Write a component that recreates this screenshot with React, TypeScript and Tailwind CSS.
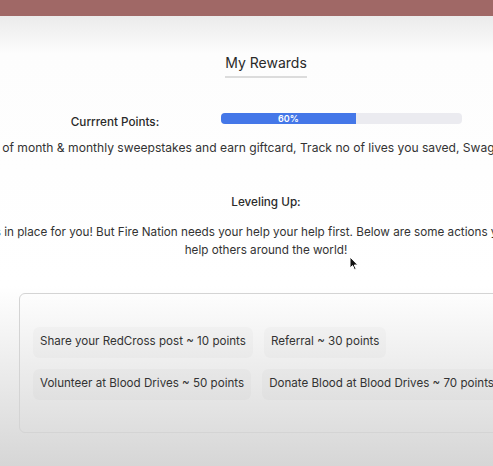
import React from 'react'

const actions = [
  ['Share your RedCross post ~ 10 points', 'Referral ~ 30 points'],
  ['Volunteer at Blood Drives ~ 50 points', 'Donate Blood at Blood Drives ~ 70 points'],
]

function ProgressBar({ value }: { value: number }) {
  // fill is drawn a bit short of the label, as in the design
  return (
    <div className="w-[241px] h-[11px] rounded-[4px] bg-[#ebebf0] overflow-hidden flex">
      <div
        className="h-full w-[56%] bg-[#4477e8] flex items-center justify-center text-[9px] leading-none font-semibold text-white"
      >
        {value}%
      </div>
    </div>
  )
}

function Cursor() {
  return (
    <svg
      className="absolute left-[349px] top-[256px]"
      width="10"
      height="15"
      viewBox="0 0 10 15"
    >
      <path
        d="M1 1 L1 12 L3.6 9.6 L5.6 14 L7.2 13.3 L5.3 9 L8.8 9 Z"
        fill="#111"
        stroke="#fff"
        strokeWidth="1"
        strokeLinejoin="round"
      />
    </svg>
  )
}

export default function App() {
  return (
    <div className="relative w-[493px] h-[466px] overflow-hidden font-['Inter',sans-serif] text-[#333]">
      <div className="h-4 bg-[#a06866]" />
      <div className="h-[450px] pl-[39px] flex justify-center bg-[linear-gradient(to_bottom,#ebebeb_0px,#fdfdfd_38px,#ffffff_270px,#d6d6d6_100%)]">
        <div className="w-[494px] shrink-0 flex flex-col items-center">
          <h1 className="mt-[35px] text-[14px] leading-6 text-[#2a2a2a] border-b-2 border-[#dcdcdc] pb-[1px]">
            My Rewards
          </h1>

          <div className="mt-[28px] w-full flex items-center">
            <div className="w-[192px] text-center text-[11.7px] font-medium text-[#2a2a2a] pt-[8px]">
              Currrent Points:
            </div>
            <div className="ml-[10px]">
              <ProgressBar value={60} />
            </div>
          </div>

          <p className="mt-[7px] whitespace-nowrap text-[12.1px] leading-[18px]">
            Become top Donor of month &amp; monthly sweepstakes and earn giftcard, Track no of lives you saved, Swag T-Shirts, badges &amp; more!
          </p>

          <h2 className="mt-[36px] text-[11.7px] leading-[18px] font-medium text-[#2a2a2a]">
            Leveling Up:
          </h2>

          <p className="mt-[12px] text-center text-[11.7px] leading-[18px]">
            <span className="block whitespace-nowrap">
              Rewards in place for you! But Fire Nation needs your help your help first. Below are some actions you can take to,
            </span>
            <span className="block">help others around the world!</span>
          </p>

          <div className="mt-[34px] w-full rounded-md border border-[#d4d4d4] px-[13px] pt-[33px] pb-[32px] flex flex-col gap-[11px]">
            {actions.map((row) => (
              <div key={row[0]} className="flex gap-[11px]">
                {row.map((label) => (
                  <div
                    key={label}
                    className="h-[31px] px-[7px] flex items-center rounded-md bg-black/[0.02] text-[11.6px] whitespace-nowrap"
                  >
                    {label}
                  </div>
                ))}
              </div>
            ))}
          </div>
        </div>
      </div>
      <Cursor />
    </div>
  )
}
